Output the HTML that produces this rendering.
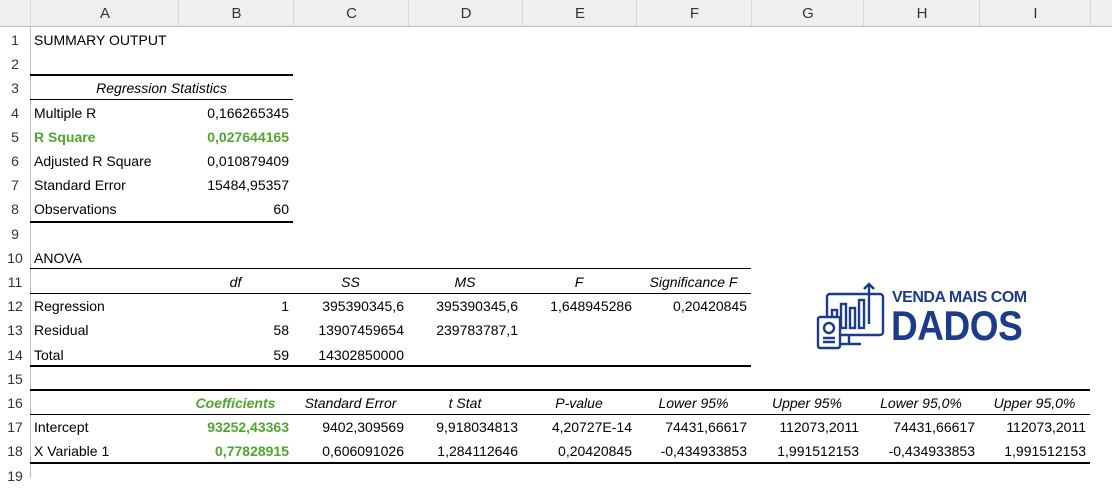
<!DOCTYPE html>
<html><head><meta charset="utf-8"><style>
body{margin:0;width:1112px;height:478px;overflow:hidden;background:#fff;font-family:"Liberation Sans",sans-serif;font-size:14px;color:#000;position:relative}
.hd{position:absolute;top:0;left:0;width:1112px;height:26px;background:#efefef;border-bottom:1px solid #bdbdbd}
.ch{position:absolute;top:0;height:26px;line-height:27px;text-align:center;color:#333;font-size:15px;border-left:1px solid #d8d8d8}
.rn{position:absolute;left:0;width:30px;height:24px;line-height:24px;text-align:center;color:#333;font-size:14px}
.c{position:absolute;height:24px;line-height:25px;white-space:nowrap;padding:0 4px;box-sizing:border-box}
.r{text-align:right}.m{text-align:center}.i{font-style:italic}.g{color:#4ea72e;font-weight:bold}
.ln{position:absolute;background:#000}
</style></head><body>
<div class="hd"></div>
<div style="position:absolute;left:0;top:0;width:30px;height:26px;background:#efefef"></div>
<div style="position:absolute;left:30px;top:27px;width:1px;height:451px;background:#bdbdbd"></div>
<div class="ch" style="left:30px;width:148px">A</div>
<div class="ch" style="left:178px;width:115px">B</div>
<div class="ch" style="left:293px;width:115px">C</div>
<div class="ch" style="left:408px;width:114px">D</div>
<div class="ch" style="left:522px;width:114px">E</div>
<div class="ch" style="left:636px;width:115px">F</div>
<div class="ch" style="left:751px;width:112px">G</div>
<div class="ch" style="left:863px;width:116px">H</div>
<div class="ch" style="left:979px;width:111px">I</div>
<div class="ch" style="left:1090px;width:22px"></div>
<div id="rows"></div>
<script>
var C=[30,178,293,408,522,636,751,863,979,1090];
var h='';
for(var n=1;n<=19;n++){h+='<div class="rn" style="top:'+(28+(n-1)*24.2)+'px">'+n+'</div>';}
function cell(row,col,txt,cls){var t=28+(row-1)*24.2;h+='<div class="c '+(cls||'')+'" style="top:'+t+'px;left:'+C[col]+'px;width:'+(C[col+1]-C[col])+'px">'+txt+'</div>';}
function line(y,x1,x2,th){h+='<div class="ln" style="top:'+y+'px;left:'+x1+'px;width:'+(x2-x1)+'px;height:'+th+'px"></div>';}
cell(1,0,'SUMMARY OUTPUT');
h+='<div class="c m i" style="top:76.4px;left:30px;width:263px">Regression Statistics</div>';
var rs=[['Multiple R','0,166265345'],['R Square','0,027644165'],['Adjusted R Square','0,010879409'],['Standard Error','15484,95357'],['Observations','60']];
rs.forEach(function(r,k){var g=k==1?'g':'';cell(4+k,0,r[0],g);cell(4+k,1,r[1],'r '+g);});
cell(10,0,'ANOVA');
['','df','SS','MS','F','Significance F'].forEach(function(t,k){if(t)cell(11,k,t,'m i');});
var an=[['Regression','1','395390345,6','395390345,6','1,648945286','0,20420845'],['Residual','58','13907459654','239783787,1','',''],['Total','59','14302850000','','','']];
an.forEach(function(r,k){r.forEach(function(t,j){if(t)cell(12+k,j,t,j?'r':'');});});
var hd=['','Coefficients','Standard Error','t Stat','P-value','Lower 95%','Upper 95%','Lower 95,0%','Upper 95,0%'];
hd.forEach(function(t,j){if(t)cell(16,j,t,'m i'+(j==1?' g':''));});
var co=[['Intercept','93252,43363','9402,309569','9,918034813','4,20727E-14','74431,66617','112073,2011','74431,66617','112073,2011'],['X Variable 1','0,77828915','0,606091026','1,284112646','0,20420845','-0,434933853','1,991512153','-0,434933853','1,991512153']];
co.forEach(function(r,k){r.forEach(function(t,j){cell(17+k,j,t,j?('r'+(j==1?' g':'')):'');});});
line(74,30,293,2);line(99,30,293,1);line(221,30,293,2);
line(268,30,751,1);line(293,30,751,1);line(365,30,751,2);
line(389,30,1090,2);line(414,30,1090,1);line(462,30,1090,2);
document.getElementById('rows').innerHTML=h;
</script>
<svg style="position:absolute;left:815px;top:280px" width="75" height="72" viewBox="0 0 75 72" fill="none" stroke="#1e3a8a" stroke-width="2.4">
<rect x="12" y="14" width="56" height="41" rx="3"/>
<path d="M34 55v8M26 64h20"/>
<rect x="17" y="30" width="5" height="18"/><rect x="26" y="24" width="5" height="24"/><rect x="35" y="28" width="5" height="20"/><rect x="44" y="20" width="5" height="28"/>
<path d="M54 44V4M49 9l5-5 5 5"/>
<rect x="3" y="37" width="22" height="31" rx="2" fill="#fff"/>
<circle cx="14" cy="48" r="5"/><path d="M8 58h12M8 62h12"/>
</svg>
<div style="position:absolute;left:892px;top:289px;color:#1e3a8a;font-weight:bold;font-size:16px;letter-spacing:-0.5px">VENDA MAIS COM</div>
<div style="position:absolute;left:891px;top:302px;color:#1e3a8a;font-weight:bold;font-size:42px;letter-spacing:-0.5px;transform:scaleX(0.88);transform-origin:left">DADOS</div>
</body></html>
